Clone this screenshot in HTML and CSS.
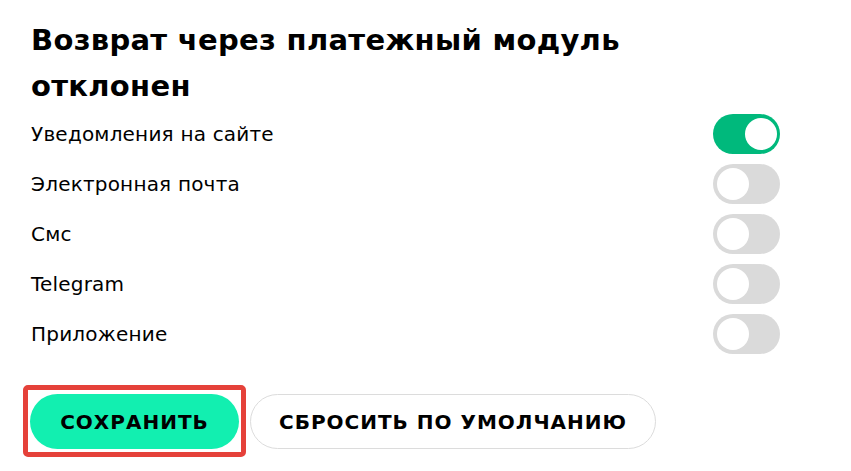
FILE: index.html
```html
<!DOCTYPE html>
<html lang="ru">
<head>
<meta charset="utf-8">
<title>Настройки уведомлений</title>
<link rel="stylesheet" href="styles.css">
</head>
<body>
<section class="panel">
  <h2 class="title">Возврат через платежный модуль отклонен</h2>
  <ul class="channels">
    <li class="channel"><span class="channel-name">Уведомления на сайте</span><span class="switch switch-on"><span class="knob"></span></span></li>
    <li class="channel"><span class="channel-name">Электронная почта</span><span class="switch"><span class="knob"></span></span></li>
    <li class="channel"><span class="channel-name">Смс</span><span class="switch"><span class="knob"></span></span></li>
    <li class="channel"><span class="channel-name">Telegram</span><span class="switch"><span class="knob"></span></span></li>
    <li class="channel"><span class="channel-name">Приложение</span><span class="switch"><span class="knob"></span></span></li>
  </ul>
  <div class="actions">
    <span class="highlight-wrap">
      <button class="btn btn-primary">Сохранить</button>
      <span class="highlight"></span>
    </span>
    <button class="btn btn-outline">Сбросить по умолчанию</button>
  </div>
</section>
</body>
</html>
```
FILE: styles.css
```css
html, body {
  margin: 0;
  padding: 0;
  background: #ffffff;
}

body {
  font-family: "DejaVu Sans", "Noto Sans", "Liberation Sans", sans-serif;
  color: #000000;
  min-height: 471px;
}

.panel {
  width: 749px;
  padding: 17px 0 22px 31px;
}

.title {
  margin: 0;
  max-width: 680px;
  font-size: 29px;
  line-height: 46px;
  font-weight: 700;
  letter-spacing: 0.3px;
}

.channels {
  list-style: none;
  margin: 0;
  padding: 0;
}

.channel {
  display: flex;
  align-items: center;
  justify-content: space-between;
  height: 50px;
}

.channel-name {
  font-size: 20px;
  font-weight: 400;
  letter-spacing: 0.2px;
}

.switch {
  display: flex;
  align-items: center;
  justify-content: flex-start;
  box-sizing: border-box;
  width: 67px;
  height: 40px;
  padding: 0 4px;
  border-radius: 20px;
  background: #dadada;
}

.switch-on {
  justify-content: flex-end;
  padding: 0 3px;
  background: #00b97c;
}

.knob {
  width: 32px;
  height: 32px;
  border-radius: 50%;
  background: #ffffff;
}

.actions {
  display: flex;
  align-items: center;
  gap: 11px;
  margin-top: 35px;
  margin-left: -1px;
}

.highlight-wrap {
  position: relative;
  display: inline-flex;
}

.highlight {
  position: absolute;
  left: -7px;
  top: -9px;
  width: 223px;
  height: 72px;
  box-sizing: border-box;
  border: 5px solid #e5413a;
  border-radius: 5px;
  pointer-events: none;
}

.btn {
  display: inline-flex;
  align-items: center;
  justify-content: center;
  box-sizing: border-box;
  height: 55px;
  margin: 0;
  border-radius: 28px;
  font-family: inherit;
  font-size: 20px;
  font-weight: 700;
  letter-spacing: 1px;
  text-transform: uppercase;
  color: #000000;
  cursor: pointer;
}

.btn-primary {
  width: 209px;
  border: none;
  background: #12efb0;
}

.btn-outline {
  width: 406px;
  border: 1px solid #dcdcdc;
  background: #ffffff;
}
```
